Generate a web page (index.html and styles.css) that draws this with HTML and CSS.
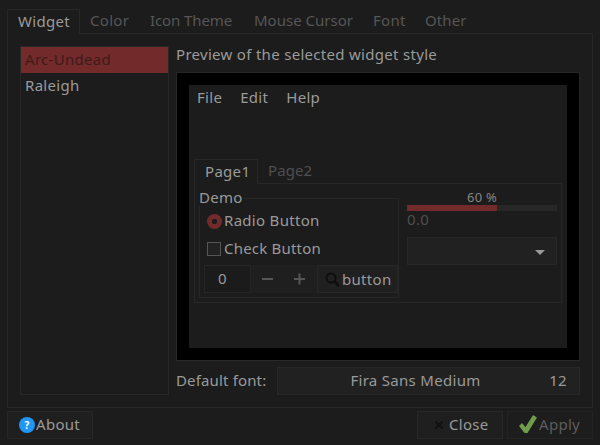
FILE: index.html
```html
<!DOCTYPE html>
<html lang="en">
<head>
<meta charset="utf-8">
<title>Appearance settings</title>
<link rel="stylesheet" href="styles.css">
</head>
<body>
<div class="dialog">
  <div class="tabs">
    <div class="tab active">Widget</div>
    <div class="tab t-color">Color</div>
    <div class="tab t-icon">Icon Theme</div>
    <div class="tab t-mouse">Mouse Cursor</div>
    <div class="tab t-font">Font</div>
    <div class="tab t-other">Other</div>
  </div>
  <div class="pane">
    <div class="list">
      <div class="item selected">Arc-Undead</div>
      <div class="item">Raleigh</div>
    </div>
    <div class="main">
      <div class="caption">Preview of the selected widget style</div>
      <div class="preview">
        <div class="inner">
          <div class="menu"><span>File</span><span>Edit</span><span>Help</span></div>
          <div class="itabs">
            <div class="itab active">Page1</div>
            <div class="itab dim">Page2</div>
          </div>
          <div class="ipane">
            <div class="group">
              <div class="legend">Demo</div>
              <div class="opt opt-radio"><span class="radio"></span>Radio Button</div>
              <div class="opt opt-check"><span class="check"></span>Check Button</div>
              <div class="controls">
                <div class="spin">
                  <div class="spin-val">0</div>
                  <svg class="spin-btns" width="66" height="26" viewBox="0 0 66 26"><path d="M11 14h11M43 14h11M48.500 8.500v11" stroke="#555" stroke-width="2" fill="none"/></svg>
                </div>
                <div class="btn-small">
                  <svg width="15" height="15" viewBox="0 0 15 15"><circle cx="6" cy="6" r="4.500" fill="none" stroke="#0e0e0e" stroke-width="2"/><path d="M9.500 9.500l4.500 4.500" stroke="#0e0e0e" stroke-width="2.500"/></svg>
                  <span>button</span>
                </div>
              </div>
            </div>
            <div class="side">
              <div class="pct">60 %</div>
              <div class="bar"><div class="fill" style="width:60%"></div></div>
              <div class="num">0.0</div>
              <div class="combo"><span class="arrow"></span></div>
            </div>
          </div>
        </div>
      </div>
      <div class="fontrow">
        <div class="fontlabel">Default font:</div>
        <div class="fontbtn"><span class="fontname">Fira Sans Medium</span><span class="fontsize">12</span></div>
      </div>
    </div>
  </div>
  <div class="footer">
    <div class="btn about">
      <svg width="16" height="16" viewBox="0 0 16 16"><circle cx="8" cy="8" r="8" fill="#2196f3"/><text x="8" y="11.500" text-anchor="middle" class="qmark">?</text></svg>
      <span>About</span>
    </div>
    <div class="spacer"></div>
    <div class="btn close">
      <svg width="10" height="10" viewBox="0 0 10 10"><path d="M1.500 1.500l7 7M8.500 1.500l-7 7" stroke="#111" stroke-width="2.200"/></svg>
      <span>Close</span>
    </div>
    <div class="btn apply">
      <svg width="20" height="20" viewBox="0 0 20 20"><path d="M1 11l3-3 3.500 4L15 0l4 2.500-9.500 15.500H6.500z" fill="#6f9c4a"/></svg>
      <span>Apply</span>
    </div>
  </div>
</div>
</body>
</html>
```
FILE: styles.css
```css
* { box-sizing: border-box; }
html, body { margin: 0; height: 100%; }
body {
  background: #1c1c1c;
  color: #9a9a9a;
  font-family: "Noto Sans", "Open Sans", sans-serif;
  font-size: 15px;
  letter-spacing: 0.3px;
  overflow: hidden;
}
.dialog { width: 600px; height: 445px; padding: 9px 7px 0 7px; }
.tabs { display: flex; height: 25px; }
.tab {
  height: 24px; line-height: 23px;
  color: #565656;
  white-space: nowrap;
}
.tab.active {
  width: 73px; height: 25px; padding-left: 10px;
  color: #9a9a9a;
  border: 1px solid #272727; border-bottom: 0;
  background: #1c1c1c;
  position: relative; z-index: 1;
}
.t-color { margin-left: 10px; width: 60px; }
.t-icon { width: 104px; letter-spacing: -0.1px; }
.t-mouse { width: 119px; letter-spacing: 0; }
.t-font { width: 52px; }
.t-other { letter-spacing: 0.1px; }
.pane {
  height: 375px; margin-top: -1px;
  width: 586px;
  border: 1px solid #272727;
  padding: 12px;
  display: flex; gap: 7px;
}
.list { width: 150px; height: 349px; border: 1px solid #272727; }
.item { height: 26px; line-height: 24px; padding-left: 4px; }
.selected { background: #722a2a; color: #3f1a1a; }
.main { width: 404px; display: flex; flex-direction: column; }
.caption { height: 26px; line-height: 17px; flex: none; }
.preview {
  width: 404px; height: 289px; flex: none;
  background: #000;
  border: 1px solid #272727; border-bottom-color: #2a2a2a;
  padding: 12px;
}
.inner { height: 263px; width: 378px; background: #1c1c1c; padding: 0 5px; }
.menu { height: 74px; padding: 3px 0 0 3px; display: flex; gap: 18px; line-height: 18px; }
.itabs { display: flex; height: 25px; }
.itab { height: 24px; line-height: 22px; padding-left: 10px; }
.itab.active {
  width: 64px; height: 25px;
  border: 1px solid #272727; border-bottom: 0;
  background: #1c1c1c; position: relative; z-index: 1;
}
.itab.dim { color: #4e4e4e; letter-spacing: 0.1px; }
.ipane {
  margin-top: -1px; width: 368px; height: 120px;
  border: 1px solid #272727;
  padding: 14px 4px 0 4px;
  display: flex; gap: 8px;
}
.group {
  position: relative;
  width: 200px; height: 100px;
  border: 1px solid #272727;
  padding-left: 4px;
}
.legend {
  position: absolute; left: -1px; top: -11px;
  background: #1c1c1c; line-height: 18px; padding-right: 1px;
}
.opt { display: flex; align-items: center; gap: 2px; height: 18px; line-height: 18px; padding-bottom: 2px; }
.opt-radio { margin: 13px 0 10px 3px; }
.opt-check { margin: 0 0 7px 3px; letter-spacing: 0.2px; }
.radio {
  width: 15px; height: 15px; border-radius: 50%; margin-top: 2px;
  background: radial-gradient(circle, #1c1c1c 0 2.500px, #722a2a 3px);
}
.check { width: 14px; height: 14px; border: 1px solid #555; background: #222; margin: 2px 1px 0 0; }
.controls { display: flex; height: 28px; }
.spin { display: flex; width: 113px; height: 28px; background: #1f1f1f; }
.spin-val { width: 47px; height: 28px; border: 1px solid #252525; background: #1b1b1b; text-align: center; line-height: 25px; padding-right: 10px; }
.spin-btns { display: block; }
.btn-small {
  width: 81px; height: 28px;
  border: 1px solid #272727; background: #202020;
  display: flex; align-items: center; gap: 2px; padding-left: 7px;
  line-height: 24px;
}
.side { width: 150px; display: flex; flex-direction: column; }
.pct { text-align: center; font-size: 13px; letter-spacing: 0.2px; line-height: 16px; height: 8px; color: #858585; margin-top: -9px; margin-bottom: 8px; }
.bar { height: 6px; background: #272727; }
.fill { height: 100%; background: #722a2a; }
.num { height: 26px; line-height: 16px; color: #4e4e4e; }
.combo { height: 28px; border: 1px solid #272727; background: #212121; position: relative; }
.arrow {
  position: absolute; right: 11px; top: 12px;
  border: 5px solid transparent; border-top: 5px solid #9a9a9a; border-bottom: 0;
}
.fontrow { display: flex; align-items: center; margin-top: 6px; height: 28px; flex: none; }
.fontlabel { width: 101px; letter-spacing: 0.15px; padding-bottom: 3px; }
.fontbtn {
  width: 303px; height: 28px;
  border: 1px solid #272727; background: #212121;
  position: relative; text-align: center; line-height: 24px;
}
.fontname { display: block; padding-right: 26px; }
.fontsize { position: absolute; right: 12px; top: 0; }
.footer { display: flex; margin-top: 3px; gap: 4px; width: 586px; }
.spacer { flex: 1; }
.btn {
  width: 86px; height: 28px;
  border: 1px solid #272727; background: #1f1f1f;
  display: flex; align-items: center; line-height: 22px;
}
.btn span { margin-bottom: 3px; }
.about { padding-left: 11px; gap: 1px; }
.close { padding-left: 16px; gap: 5px; }
.apply { padding-left: 10px; gap: 1px; color: #5c5c5c; border-color: #232323; background: #1d1d1d; }
.qmark { font-size: 10px; font-weight: 700; fill: #fff; letter-spacing: 0; }
```
